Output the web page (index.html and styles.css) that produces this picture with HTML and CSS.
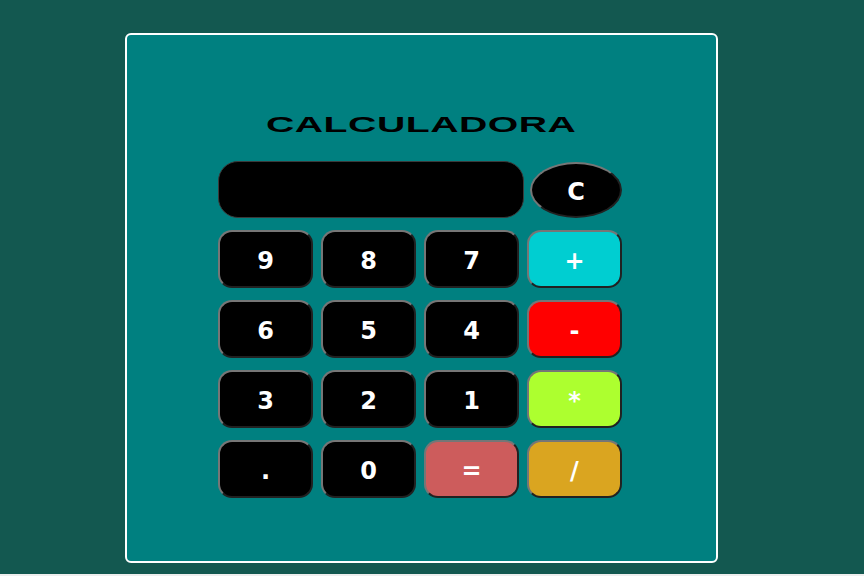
FILE: index.html
```html
<!DOCTYPE html>
<html lang="pt">
<head>
<meta charset="utf-8">
<title>Calculadora</title>
<link rel="stylesheet" href="styles.css">
</head>
<body>
<div class="page">
  <div class="card">
    <h1 class="title"><span>CALCULADORA</span></h1>
    <div class="calc">
      <div class="top-row">
        <div class="display"></div>
        <button class="btn clear">C</button>
      </div>
      <div class="keys">
        <button class="btn num">9</button>
        <button class="btn num">8</button>
        <button class="btn num">7</button>
        <button class="btn op plus">+</button>
        <button class="btn num">6</button>
        <button class="btn num">5</button>
        <button class="btn num">4</button>
        <button class="btn op minus">-</button>
        <button class="btn num">3</button>
        <button class="btn num">2</button>
        <button class="btn num">1</button>
        <button class="btn op times">*</button>
        <button class="btn num">.</button>
        <button class="btn num">0</button>
        <button class="btn op equals">=</button>
        <button class="btn op divide">/</button>
      </div>
    </div>
  </div>
</div>
</body>
</html>
```
FILE: styles.css
```css
html {
  background: #eeeeee;
}
body {
  margin: 0;
}
.page {
  background: #135850;
  height: 574px;
  padding-top: 33px;
  box-sizing: border-box;
}
.card {
  margin-left: 125px;
  width: 593px;
  height: 530px;
  background: #008080;
  border: 2px solid #ffffff;
  border-radius: 6px;
  padding-top: 77px;
  box-sizing: border-box;
}
.title {
  margin: 0;
  font-family: "Liberation Sans", Arial, sans-serif;
  font-weight: bold;
  font-size: 22px;
  line-height: 25px;
  color: #000;
  text-align: center;
}
.title span {
  display: inline-block;
  transform: scaleX(1.78);
  letter-spacing: 0.3px;
}
.calc {
  width: 404px;
  margin: 24px 0 0 91px;
}
.top-row {
  display: flex;
  gap: 6px;
  height: 57px;
}
.display {
  width: 309px;
  height: 57px;
  box-sizing: border-box;
  background: #000;
  border: 1px solid #3a3a3a;
  border-radius: 20px;
}
.btn {
  font-family: "DejaVu Sans", sans-serif;
  font-weight: bold;
  font-size: 24px;
  color: #ffffff;
  background: #000;
  border: 2px outset #767676;
  border-radius: 14px;
  padding: 3px 0 0;
  margin: 0;
  box-sizing: border-box;
}
.clear {
  width: 93px;
  height: 56px;
  border-radius: 50%;
  margin-top: 1px;
}
.keys {
  margin-top: 12px;
  display: grid;
  grid-template-columns: repeat(4, 95px);
  grid-auto-rows: 58px;
  column-gap: 8px;
  row-gap: 12px;
}
.plus { background: #00ced1; }
.minus { background: #ff0000; }
.times { background: #adff2f; }
.equals { background: #cd5c5c; }
.divide { background: #daa520; }
```
